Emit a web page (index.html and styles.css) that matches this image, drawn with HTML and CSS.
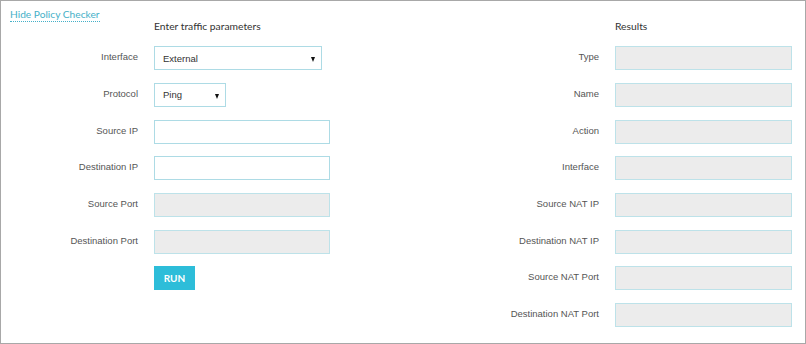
FILE: index.html
```html
<!DOCTYPE html>
<html lang="en">
<head>
<meta charset="utf-8">
<title>Policy Checker</title>
<link rel="stylesheet" href="styles.css">
</head>
<body>
<div class="checker">
  <div class="forms">
    <section class="form form-params">
      <a class="toggle" href="#">Hide Policy Checker</a>
      <h2 class="heading">Enter traffic parameters</h2>

      <label class="label">Interface</label>
      <div class="select select-wide"><span class="select-value">External</span><span class="caret"></span></div>

      <label class="label">Protocol</label>
      <div class="select select-narrow"><span class="select-value">Ping</span><span class="caret"></span></div>

      <label class="label">Source IP</label>
      <input class="field" type="text">

      <label class="label">Destination IP</label>
      <input class="field" type="text">

      <label class="label">Source Port</label>
      <input class="field" type="text" disabled>

      <label class="label">Destination Port</label>
      <input class="field" type="text" disabled>

      <span class="spacer"></span>
      <button class="run" type="button">RUN</button>
    </section>

    <section class="form form-results">
      <span class="spacer"></span>
      <h2 class="heading">Results</h2>

      <label class="label">Type</label>
      <input class="field" type="text" disabled>

      <label class="label">Name</label>
      <input class="field" type="text" disabled>

      <label class="label">Action</label>
      <input class="field" type="text" disabled>

      <label class="label">Interface</label>
      <input class="field" type="text" disabled>

      <label class="label">Source NAT IP</label>
      <input class="field" type="text" disabled>

      <label class="label">Destination NAT IP</label>
      <input class="field" type="text" disabled>

      <label class="label">Source NAT Port</label>
      <input class="field" type="text" disabled>

      <label class="label">Destination NAT Port</label>
      <input class="field" type="text" disabled>
    </section>
  </div>
</div>
</body>
</html>
```

FILE: styles.css
```css
* {
  box-sizing: border-box;
}

html, body {
  margin: 0;
  padding: 0;
  background: #ffffff;
}

.checker {
  width: 806px;
  height: 344px;
  border: 1px solid #a8a8a8;
  padding: 6px 0 0 0;
  background: #ffffff;
}

.forms {
  display: flex;
  gap: 16px;
}

.form {
  display: grid;
  column-gap: 16px;
  row-gap: 12.7px;
  align-items: center;
}

.form-params {
  grid-template-columns: 137px 176px;
  grid-template-rows: 26.6px repeat(7, 24px);
}

.form-results {
  grid-template-columns: 253px 177px;
  grid-template-rows: 26.6px repeat(8, 24px);
}

.toggle {
  align-self: start;
  justify-self: start;
  margin-left: 9px;
  display: inline-block;
  font-family: Lato, "Open Sans", sans-serif;
  font-size: 10.2px;
  line-height: 14px;
  color: #45b0c8;
  text-decoration: none;
  border-bottom: 1px dotted #45b0c8;
}

.heading {
  align-self: end;
  margin: 0;
  font-family: Lato, "Open Sans", sans-serif;
  font-size: 10.3px;
  font-weight: 400;
  line-height: 15px;
  color: #333333;
}

.label {
  justify-self: end;
  font-family: "Liberation Sans", Arial, sans-serif;
  font-size: 9.5px;
  line-height: 12px;
  color: #555555;
  padding-bottom: 2px;
}

.field {
  width: 100%;
  height: 24px;
  margin: 0;
  padding: 0 8px;
  border: 1px solid #addbe5;
  border-radius: 0;
  background: #ffffff;
  font-family: "Liberation Sans", Arial, sans-serif;
  font-size: 9.5px;
  color: #333333;
  outline: none;
}

.field:disabled {
  background: #ececec;
  border-color: #bde2e9;
}

.select {
  position: relative;
  display: flex;
  align-items: center;
  height: 24px;
  padding: 0 8px;
  border: 1px solid #addbe5;
  background: #ffffff;
  font-family: "Liberation Sans", Arial, sans-serif;
  font-size: 9.5px;
  color: #333333;
}

.select-wide {
  width: 168px;
}

.select-narrow {
  width: 72px;
}

.caret {
  position: absolute;
  right: 6px;
  top: 10px;
  width: 0;
  height: 0;
  border-left: 2.5px solid transparent;
  border-right: 2.5px solid transparent;
  border-top: 5px solid #111111;
}

.run {
  justify-self: start;
  width: 41px;
  height: 24px;
  margin: 0;
  padding: 0;
  border: none;
  border-radius: 0;
  background: #2dbdd9;
  color: #ffffff;
  font-family: Lato, "Open Sans", sans-serif;
  font-size: 10px;
  font-weight: 700;
  cursor: pointer;
}
```
